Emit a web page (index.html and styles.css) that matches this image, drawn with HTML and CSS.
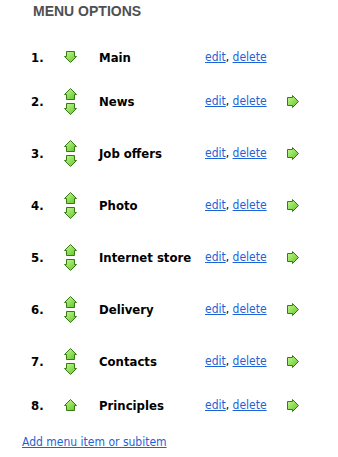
FILE: index.html
```html
<html>
  <head>
    <link rel="stylesheet" href="styles.css">
  </head>
  <body>
    <div class="menu-options">
      <h2>MENU OPTIONS</h2>
      <div class="menu-list">
        <div class="menu-row single">
          <span class="num">1.</span>
          <span class="moves">
            <svg class="arrow" width="13" height="12" viewBox="0 0 13 12"><path class="down" d="M2.5 .5H10.5V5.5H12.5L6.5 11.5L.5 5.5H2.5Z"/></svg>
          </span>
          <span class="name">Main</span>
          <span class="actions"><a href="#">edit</a>, <a href="#">delete</a></span>
          <span class="sub"></span>
        </div>
        <div class="menu-row">
          <span class="num">2.</span>
          <span class="moves">
            <svg class="arrow" width="13" height="12" viewBox="0 0 13 12"><path d="M6.5 .5L12.5 6.5H10.5V11.5H2.5V6.5H.5Z"/></svg>
            <svg class="arrow" width="13" height="12" viewBox="0 0 13 12"><path d="M2.5 .5H10.5V5.5H12.5L6.5 11.5L.5 5.5H2.5Z"/></svg>
          </span>
          <span class="name">News</span>
          <span class="actions"><a href="#">edit</a>, <a href="#">delete</a></span>
          <span class="sub"><svg class="arrow" width="12" height="13" viewBox="0 0 12 13"><path d="M.5 2.5H5.5V.5L11.5 6.5L5.5 12.5V10.5H.5Z"/></svg></span>
        </div>
        <div class="menu-row">
          <span class="num">3.</span>
          <span class="moves">
            <svg class="arrow" width="13" height="12" viewBox="0 0 13 12"><path d="M6.5 .5L12.5 6.5H10.5V11.5H2.5V6.5H.5Z"/></svg>
            <svg class="arrow" width="13" height="12" viewBox="0 0 13 12"><path d="M2.5 .5H10.5V5.5H12.5L6.5 11.5L.5 5.5H2.5Z"/></svg>
          </span>
          <span class="name">Job offers</span>
          <span class="actions"><a href="#">edit</a>, <a href="#">delete</a></span>
          <span class="sub"><svg class="arrow" width="12" height="13" viewBox="0 0 12 13"><path d="M.5 2.5H5.5V.5L11.5 6.5L5.5 12.5V10.5H.5Z"/></svg></span>
        </div>
        <div class="menu-row">
          <span class="num">4.</span>
          <span class="moves">
            <svg class="arrow" width="13" height="12" viewBox="0 0 13 12"><path d="M6.5 .5L12.5 6.5H10.5V11.5H2.5V6.5H.5Z"/></svg>
            <svg class="arrow" width="13" height="12" viewBox="0 0 13 12"><path d="M2.5 .5H10.5V5.5H12.5L6.5 11.5L.5 5.5H2.5Z"/></svg>
          </span>
          <span class="name">Photo</span>
          <span class="actions"><a href="#">edit</a>, <a href="#">delete</a></span>
          <span class="sub"><svg class="arrow" width="12" height="13" viewBox="0 0 12 13"><path d="M.5 2.5H5.5V.5L11.5 6.5L5.5 12.5V10.5H.5Z"/></svg></span>
        </div>
        <div class="menu-row">
          <span class="num">5.</span>
          <span class="moves">
            <svg class="arrow" width="13" height="12" viewBox="0 0 13 12"><path d="M6.5 .5L12.5 6.5H10.5V11.5H2.5V6.5H.5Z"/></svg>
            <svg class="arrow" width="13" height="12" viewBox="0 0 13 12"><path d="M2.5 .5H10.5V5.5H12.5L6.5 11.5L.5 5.5H2.5Z"/></svg>
          </span>
          <span class="name">Internet store</span>
          <span class="actions"><a href="#">edit</a>, <a href="#">delete</a></span>
          <span class="sub"><svg class="arrow" width="12" height="13" viewBox="0 0 12 13"><path d="M.5 2.5H5.5V.5L11.5 6.5L5.5 12.5V10.5H.5Z"/></svg></span>
        </div>
        <div class="menu-row">
          <span class="num">6.</span>
          <span class="moves">
            <svg class="arrow" width="13" height="12" viewBox="0 0 13 12"><path d="M6.5 .5L12.5 6.5H10.5V11.5H2.5V6.5H.5Z"/></svg>
            <svg class="arrow" width="13" height="12" viewBox="0 0 13 12"><path d="M2.5 .5H10.5V5.5H12.5L6.5 11.5L.5 5.5H2.5Z"/></svg>
          </span>
          <span class="name">Delivery</span>
          <span class="actions"><a href="#">edit</a>, <a href="#">delete</a></span>
          <span class="sub"><svg class="arrow" width="12" height="13" viewBox="0 0 12 13"><path d="M.5 2.5H5.5V.5L11.5 6.5L5.5 12.5V10.5H.5Z"/></svg></span>
        </div>
        <div class="menu-row">
          <span class="num">7.</span>
          <span class="moves">
            <svg class="arrow" width="13" height="12" viewBox="0 0 13 12"><path d="M6.5 .5L12.5 6.5H10.5V11.5H2.5V6.5H.5Z"/></svg>
            <svg class="arrow" width="13" height="12" viewBox="0 0 13 12"><path d="M2.5 .5H10.5V5.5H12.5L6.5 11.5L.5 5.5H2.5Z"/></svg>
          </span>
          <span class="name">Contacts</span>
          <span class="actions"><a href="#">edit</a>, <a href="#">delete</a></span>
          <span class="sub"><svg class="arrow" width="12" height="13" viewBox="0 0 12 13"><path d="M.5 2.5H5.5V.5L11.5 6.5L5.5 12.5V10.5H.5Z"/></svg></span>
        </div>
        <div class="menu-row single">
          <span class="num">8.</span>
          <span class="moves">
            <svg class="arrow" width="13" height="12" viewBox="0 0 13 12"><path d="M6.5 .5L12.5 6.5H10.5V11.5H2.5V6.5H.5Z"/></svg>
          </span>
          <span class="name">Principles</span>
          <span class="actions"><a href="#">edit</a>, <a href="#">delete</a></span>
          <span class="sub"><svg class="arrow" width="12" height="13" viewBox="0 0 12 13"><path d="M.5 2.5H5.5V.5L11.5 6.5L5.5 12.5V10.5H.5Z"/></svg></span>
        </div>
      </div>
      <a class="add-link" href="#">Add menu item or subitem</a>
    </div>
    <svg width="0" height="0" class="defs">
      <defs>
        <linearGradient id="green" x1="0" y1="0" x2="1" y2="1">
          <stop offset="0" stop-color="#c8fa98"/>
          <stop offset="1" stop-color="#5cc41e"/>
        </linearGradient>
      </defs>
    </svg>
  </body>
</html>
```

FILE: styles.css
```css
body {
  margin: 0;
  background: white;
  font-family: Tahoma, "DejaVu Sans Condensed", "DejaVu Sans", sans-serif;
  font-size: 12px;
  color: black;
}
.menu-options {
  padding: 2px 0 0 22px;
}
h2 {
  font-family: "Liberation Sans", Arial, sans-serif;
  font-size: 14px;
  font-weight: bold;
  color: #505050;
  margin: 0 0 0 11px;
  line-height: 18px;
}
.menu-list {
  margin-top: 19px;
}
.menu-row {
  display: grid;
  grid-template-columns: 33px 35px 106px 82px 20px;
  align-items: center;
  height: 52px;
  padding-left: 9px;
}
.menu-row.single {
  height: 36px;
}
.num, .name {
  font-weight: bold;
  font-size: 13px;
}
.moves {
  display: flex;
  flex-direction: column;
  gap: 3px;
}
.arrow {
  display: block;
}
.arrow path {
  fill: url(#green);
  stroke: #357a14;
  stroke-width: 1;
}
a {
  color: #1e63d6;
}
.actions {
  color: black;
}
.defs {
  position: absolute;
}
.add-link {
  display: inline-block;
  margin-top: 12px;
}
```
